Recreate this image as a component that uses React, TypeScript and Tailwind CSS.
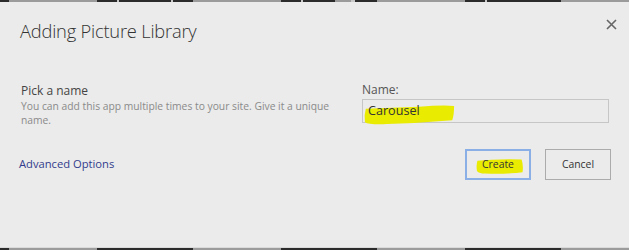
const DARK = "bg-[#2b2b2b]";
const GRAY = "bg-[#9b9b9b]";
const LIGHT = "bg-[#c8c8c8]";

const topStrip = [
  { w: "w-[9px]", c: DARK },
  { w: "w-[88px]", c: GRAY },
  { w: "w-[20px]", c: DARK },
  { w: "w-[2px]", c: LIGHT },
  { w: "w-[52px]", c: DARK },
  { w: "w-[2px]", c: LIGHT },
  { w: "w-[20px]", c: DARK },
  { w: "w-[88px]", c: GRAY },
  { w: "w-[20px]", c: DARK },
  { w: "w-[2px]", c: LIGHT },
  { w: "w-[32px]", c: DARK },
  { w: "w-[16px]", c: GRAY },
  { w: "w-[4px]", c: LIGHT },
  { w: "w-[22px]", c: DARK },
  { w: "w-[88px]", c: GRAY },
  { w: "w-[20px]", c: DARK },
  { w: "w-[2px]", c: LIGHT },
  { w: "w-[74px]", c: DARK },
  { w: "w-[68px]", c: GRAY },
];

const bottomStrip = [
  { w: "w-[9px]", c: DARK },
  { w: "w-[88px]", c: GRAY },
  { w: "w-[96px]", c: DARK },
  { w: "w-[88px]", c: GRAY },
  { w: "w-[96px]", c: DARK },
  { w: "w-[88px]", c: GRAY },
  { w: "w-[96px]", c: DARK },
  { w: "w-[68px]", c: GRAY },
];

function Strip({ parts }: { parts: { w: string; c: string }[] }) {
  return (
    <div className="flex h-[2px] shrink-0">
      {parts.map((p, i) => (
        <div key={i} className={`${p.w} ${p.c} h-full shrink-0`} />
      ))}
    </div>
  );
}

// yellow marker swipe drawn over the screenshot
function Marker({ className, d }: { className: string; d: string }) {
  return (
    <svg className={`absolute pointer-events-none ${className}`} viewBox="0 0 100 24" preserveAspectRatio="none">
      <path d={d} fill="#e9eb00" />
    </svg>
  );
}

export default function App() {
  return (
    <div
      className="w-[629px] h-[250px] flex flex-col bg-[#ebebeb] text-[#444]"
      style={{ fontFamily: '"Open Sans", "Noto Sans", sans-serif' }}
    >
      <Strip parts={topStrip} />

      <div className="flex-1 flex flex-col pl-5 pr-[18px] border-b border-[#dadada]">
        <header className="flex items-start justify-between pt-[15px]">
          <h1 className="text-[18.3px] font-light leading-[28px] text-[#333] tracking-[-0.2px]">
            Adding Picture Library
          </h1>
          <button className="-mr-[7px] w-[14px] h-[14px] flex items-center justify-center text-[#666]" aria-label="Close">
            <svg width="11" height="11" viewBox="0 0 11 11">
              <path d="M1 1 L10 10 M10 1 L1 10" stroke="currentColor" strokeWidth="1.6" />
            </svg>
          </button>
        </header>

        <div className="flex justify-between mt-[38px]">
          <div className="w-[326px] pl-px">
            <div className="text-[12px] leading-[16px] text-[#444]">Pick a name</div>
            <p className="text-[10.3px] leading-[14px] text-[#8a8a8a]">
              You can add this app multiple times to your site. Give it a unique name.
            </p>
          </div>
          <div className="w-[247px] mr-[2px] -mt-[1px]">
            <div className="text-[12px] leading-[16px] text-[#555]">Name:</div>
            <div className="relative mt-[1px] h-[24px] border border-[#c6c6c6] bg-[#ebebeb] flex items-center px-[5px]">
              <Marker
                className="left-[1px] top-[3px] w-[91px] h-[23px]"
                d="M2 6 Q30 5 60 4 Q85 2 99 3 Q99 12 97 18 Q60 21 25 22 Q6 23 1 20 Q0 12 2 6 Z"
              />
              <span className="relative text-[12.6px] text-[#333]">Carousel</span>
            </div>
          </div>
        </div>

        <div className="flex items-center justify-between mt-[22px]">
          <a className="text-[11.2px] text-[#323c8c] -ml-px">Advanced Options</a>
          <div className="flex gap-[14px]">
            <button className="relative w-[66px] h-[31px] border-2 border-[#8aaee6] text-[10.4px] text-[#333] flex items-center justify-center">
              <Marker
                className="left-[9px] top-[7px] w-[48px] h-[17px]"
                d="M3 4 Q40 1 95 2 Q99 10 97 20 Q60 23 20 22 Q4 22 2 18 Q0 10 3 4 Z"
              />
              <span className="relative">Create</span>
            </button>
            <button className="w-[66px] h-[31px] border border-[#ababab] text-[10.4px] text-[#333] flex items-center justify-center">
              Cancel
            </button>
          </div>
        </div>
      </div>

      <Strip parts={bottomStrip} />
    </div>
  );
}
